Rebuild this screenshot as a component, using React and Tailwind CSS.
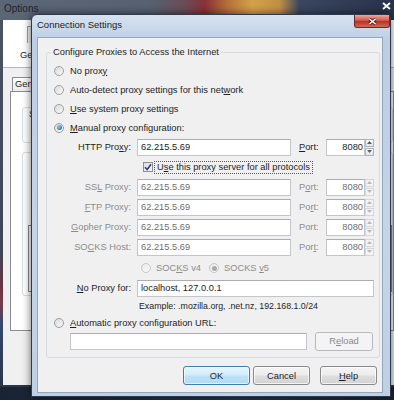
import React from "react";

function Radio({ checked, disabled }) {
  return (
    <span
      className={`flex h-[10px] w-[10px] shrink-0 items-center justify-center rounded-full border ${
        disabled
          ? "border-[#c4c7ca] bg-[linear-gradient(135deg,#e9e9e9,#fbfbfb)]"
          : "border-[#9aa0a6] bg-[linear-gradient(135deg,#d8d8d8,#fafafa)]"
      }`}
    >
      {checked && (
        <span
          className={
            disabled
              ? "h-[5px] w-[5px] rounded-full bg-[#a9a9a9]"
              : "h-[5px] w-[5px] rounded-full bg-[radial-gradient(circle_at_35%_35%,#86cdf0,#1b5a8c)]"
          }
        />
      )}
    </span>
  );
}

function Field({ value, disabled, className }) {
  return (
    <div
      className={`flex h-[17px] items-center border border-[#c2c6cc] border-t-[#abadb3] bg-white px-[3px] ${
        disabled ? "text-[#6e6e6e]" : "text-[#1b1b1b]"
      } ${className}`}
    >
      {value}
    </div>
  );
}

function Spinner({ disabled }) {
  const arrow = disabled ? "#b9b9b9" : "#4a5e82";
  return (
    <div className="flex h-[17px] w-[9px] flex-col">
      <div
        className={`flex h-[8px] items-center justify-center border ${
          disabled
            ? "border-[#d6d6d6] bg-[#f4f4f4]"
            : "border-[#aeb3b9] bg-[linear-gradient(#fbfbfb,#e3e3e3)]"
        }`}
      >
        <svg width="5" height="3" viewBox="0 0 5 3">
          <path d="M0 3L2.5 0L5 3Z" fill={arrow} />
        </svg>
      </div>
      <div
        className={`mt-[1px] flex h-[8px] items-center justify-center border ${
          disabled
            ? "border-[#d6d6d6] bg-[#f4f4f4]"
            : "border-[#aeb3b9] bg-[linear-gradient(#fbfbfb,#e3e3e3)]"
        }`}
      >
        <svg width="5" height="3" viewBox="0 0 5 3">
          <path d="M0 0L2.5 3L5 0Z" fill={arrow} />
        </svg>
      </div>
    </div>
  );
}

function ProxyRow({ label, portLabel, disabled }) {
  return (
    <div className="flex h-[20px] items-center">
      <span
        className={`w-[77px] whitespace-nowrap text-right ${
          disabled ? "text-[#8c8c8c]" : ""
        }`}
      >
        {label}
      </span>
      <Field className="ml-[6px] w-[154px]" value="62.215.5.69" disabled={disabled} />
      <span className={`ml-[8px] w-[20px] ${disabled ? "text-[#8c8c8c]" : ""}`}>
        {portLabel}
      </span>
      <Field
        className="ml-[7px] w-[39px] justify-end !pr-[1px]"
        value="8080"
        disabled={disabled}
      />
      <Spinner disabled={disabled} />
    </div>
  );
}

function OptionsWindow() {
  return (
    <div className="absolute left-0 top-0 flex h-[387px] w-[394px] flex-col bg-[linear-gradient(180deg,#4a5462_0%,#3d4654_65%,#6a3444_74%,#7b3a4a_78%,#34486c_84%,#2a3548_100%)] pb-[2px]">
      {/* Title bar */}
      <div className="flex h-[20px] shrink-0 items-start justify-between bg-[linear-gradient(90deg,#5b6676_0%,#566171_38%,#6a4c56_47%,#8b3036_52%,#b5733a_58%,#d3a24a_64%,#bf8f44_71%,#3a4660_76%,#27334a_100%)] pl-[4px] pr-[3px] pt-[3px]">
        <span className="text-[10px] text-[#1b2430]">Options</span>
        <svg width="9" height="8" viewBox="0 0 9 8" className="mt-[-1px]">
          <path d="M1 1L8 7M8 1L1 7" stroke="#ffffff" strokeWidth="1.8" />
        </svg>
      </div>
      <div className="ml-[3px] flex flex-1 flex-col bg-[#f0f0f0]">
        {/* Toolbar */}
        <div className="flex h-[48px] shrink-0 flex-col border-b border-[#b3b8bf] bg-white pt-[6px]">
          <div className="ml-[24px] h-[17px] w-[20px] border-l border-t border-[#9aa3ad] bg-[#eef2f7]" />
          <span className="ml-[17px] mt-[6px]">General</span>
        </div>
        {/* Tabs + panel */}
        <div className="flex flex-col pl-[7px] pt-[9px]">
          <div className="ml-[2px] h-[14px] w-[44px] border border-b-0 border-[#898c95] bg-[linear-gradient(#fdfdfd,#ececec)] pl-[2px] leading-[13px]">
            General
          </div>
          <div className="flex h-[240px] flex-col border border-[#898c95] bg-white pl-[11px]">
            <div className="mt-[15px] h-[36px] rounded-[3px] border border-[#d5dfe5] pl-[6px] text-[#3a3a3a]">
              Startup
            </div>
            <div className="mt-[9px] h-[144px] rounded-[3px] border border-[#d5dfe5] pl-[5px] pt-[72px]">
              <div className="h-[67px] border border-[#828790] bg-white" />
            </div>
          </div>
        </div>
      </div>
    </div>
  );
}

function ConnectionDialog() {
  return (
    <div className="absolute left-[31px] top-[14px] flex h-[383px] w-[360px] flex-col rounded-t-[6px] border border-[#2e3a4b] bg-[linear-gradient(180deg,#d6e2f0_0%,#bccee4_7%,#c4d5e9_60%,#bfd0e4_100%)] shadow-[0_0_8px_rgba(0,0,0,0.6)]">
      {/* Title bar */}
      <div className="flex h-[22px] shrink-0 items-start justify-between pl-[5px]">
        <span className="pt-[4px] text-[9.5px] text-[#1c1c1c]">Connection Settings</span>
        <div className="flex h-[13px] w-[36px] items-center justify-center rounded-b-[3px] border border-t-0 border-[#6b2a2a] bg-[linear-gradient(180deg,#e9a999_0%,#d4594c_45%,#ba3126_55%,#cf6a55_100%)]">
          <svg width="9" height="7" viewBox="0 0 9 7">
            <path d="M1.5 1L7.5 6M7.5 1L1.5 6" stroke="#3d1414" strokeWidth="3" />
            <path d="M1.5 1L7.5 6M7.5 1L1.5 6" stroke="#ffffff" strokeWidth="1.6" />
          </svg>
        </div>
      </div>

      {/* Client area */}
      <div className="mb-[3px] ml-[5px] mr-[7px] flex flex-1 flex-col border border-[#93a6bd] bg-[#f0f0f0]">
        <fieldset className="ml-[8px] mr-[2px] mt-[8px] rounded-[3px] border border-[#d5dbe0] pb-[6px] pl-[7px] pt-[3px]">
          <legend className="ml-[-3px] px-[2px] leading-[12px]">
            Configure Proxies to Access the Internet
          </legend>

          <div className="flex h-[19px] items-center gap-[6px]">
            <Radio />
            <span>
              No prox<u>y</u>
            </span>
          </div>
          <div className="flex h-[19px] items-center gap-[6px]">
            <Radio />
            <span>
              Auto-detect proxy settings for this net<u>w</u>ork
            </span>
          </div>
          <div className="flex h-[19px] items-center gap-[6px]">
            <Radio />
            <span>
              <u>U</u>se system proxy settings
            </span>
          </div>
          <div className="flex h-[19px] items-center gap-[6px]">
            <Radio checked />
            <span>
              <u>M</u>anual proxy configuration:
            </span>
          </div>

          <ProxyRow
            label={
              <>
                HTTP Pro<u>x</u>y:
              </>
            }
            portLabel={
              <>
                <u>P</u>ort:
              </>
            }
          />

          <div className="flex h-[20px] items-center pl-[89px]">
            <span className="flex h-[10px] w-[10px] shrink-0 items-center justify-center border border-[#8e8f8f] bg-[linear-gradient(135deg,#d7dce2,#fdfdfd)]">
              <svg width="8" height="8" viewBox="0 0 8 8">
                <path d="M1 4.2L3.2 6.5L7 1.2" fill="none" stroke="#2f3f83" strokeWidth="1.6" />
              </svg>
            </span>
            <span className="ml-[1px] flex h-[13px] items-center whitespace-nowrap border border-dotted border-[#5a5a5a] px-[2px]">
              U<u>s</u>e this proxy server for all protocols
            </span>
          </div>

          <ProxyRow
            disabled
            label={
              <>
                SS<u>L</u> Proxy:
              </>
            }
            portLabel={
              <>
                P<u>o</u>rt:
              </>
            }
          />
          <ProxyRow
            disabled
            label={
              <>
                <u>F</u>TP Proxy:
              </>
            }
            portLabel={
              <>
                Po<u>r</u>t:
              </>
            }
          />
          <ProxyRow
            disabled
            label={
              <>
                <u>G</u>opher Proxy:
              </>
            }
            portLabel={<>Port:</>}
          />
          <ProxyRow
            disabled
            label={
              <>
                SO<u>C</u>KS Host:
              </>
            }
            portLabel={
              <>
                Por<u>t</u>:
              </>
            }
          />

          <div className="flex h-[22px] items-center pl-[87px] text-[#8c8c8c]">
            <div className="flex w-[68px] items-center gap-[5px]">
              <Radio disabled />
              <span>
                SOC<u>K</u>S v4
              </span>
            </div>
            <div className="flex items-center gap-[5px]">
              <Radio checked disabled />
              <span>
                SOCKS <u>v</u>5
              </span>
            </div>
          </div>

          <div className="flex h-[18px] items-center">
            <span className="w-[77px] whitespace-nowrap text-right">
              <u>N</u>o Proxy for:
            </span>
            <Field className="ml-[6px] w-[237px]" value="localhost, 127.0.0.1" />
          </div>

          <div className="flex h-[17px] items-center pl-[85px] text-[8.8px]">
            Example: .mozilla.org, .net.nz, 192.168.1.0/24
          </div>

          <div className="flex h-[17px] items-center gap-[6px]">
            <Radio />
            <span>
              <u>A</u>utomatic proxy configuration URL:
            </span>
          </div>

          <div className="flex h-[20px] items-center pl-[16px]">
            <Field className="w-[237px]" value="" />
            <button className="ml-[8px] h-[19px] w-[58px] rounded-[3px] border border-[#b6babe] bg-[#f4f4f4] text-[#8a8a8a]">
              R<u>e</u>load
            </button>
          </div>
        </fieldset>

        {/* Buttons */}
        <div className="mt-[8px] flex justify-end pr-[5px]">
          <button className="h-[19px] w-[67px] rounded-[3px] border border-[#3c7fb1] bg-[linear-gradient(180deg,#e8f5fc_0%,#d2ebf9_48%,#bde2f6_52%,#b0dbf3_100%)] shadow-[inset_0_0_0_1px_rgba(255,255,255,0.6)]">
            OK
          </button>
          <button className="ml-[3px] h-[19px] w-[57px] rounded-[3px] border border-[#8a8a8a] bg-[linear-gradient(180deg,#f4f4f4_0%,#ececec_48%,#dedede_52%,#d3d3d3_100%)] shadow-[inset_0_0_0_1px_rgba(255,255,255,0.7)]">
            Cancel
          </button>
          <button className="ml-[10px] h-[19px] w-[57px] rounded-[3px] border border-[#8a8a8a] bg-[linear-gradient(180deg,#f4f4f4_0%,#ececec_48%,#dedede_52%,#d3d3d3_100%)] shadow-[inset_0_0_0_1px_rgba(255,255,255,0.7)]">
            <u>H</u>elp
          </button>
        </div>
      </div>
    </div>
  );
}

export default function App() {
  return (
    <div className="relative h-[400px] w-[394px] overflow-hidden bg-[linear-gradient(90deg,#1a2332,#213552_60%,#1a2332)] font-['Liberation_Sans',Arial,sans-serif] text-[9.3px] leading-[12px] text-[#1e1e1e]">
      <OptionsWindow />
      <ConnectionDialog />
    </div>
  );
}
